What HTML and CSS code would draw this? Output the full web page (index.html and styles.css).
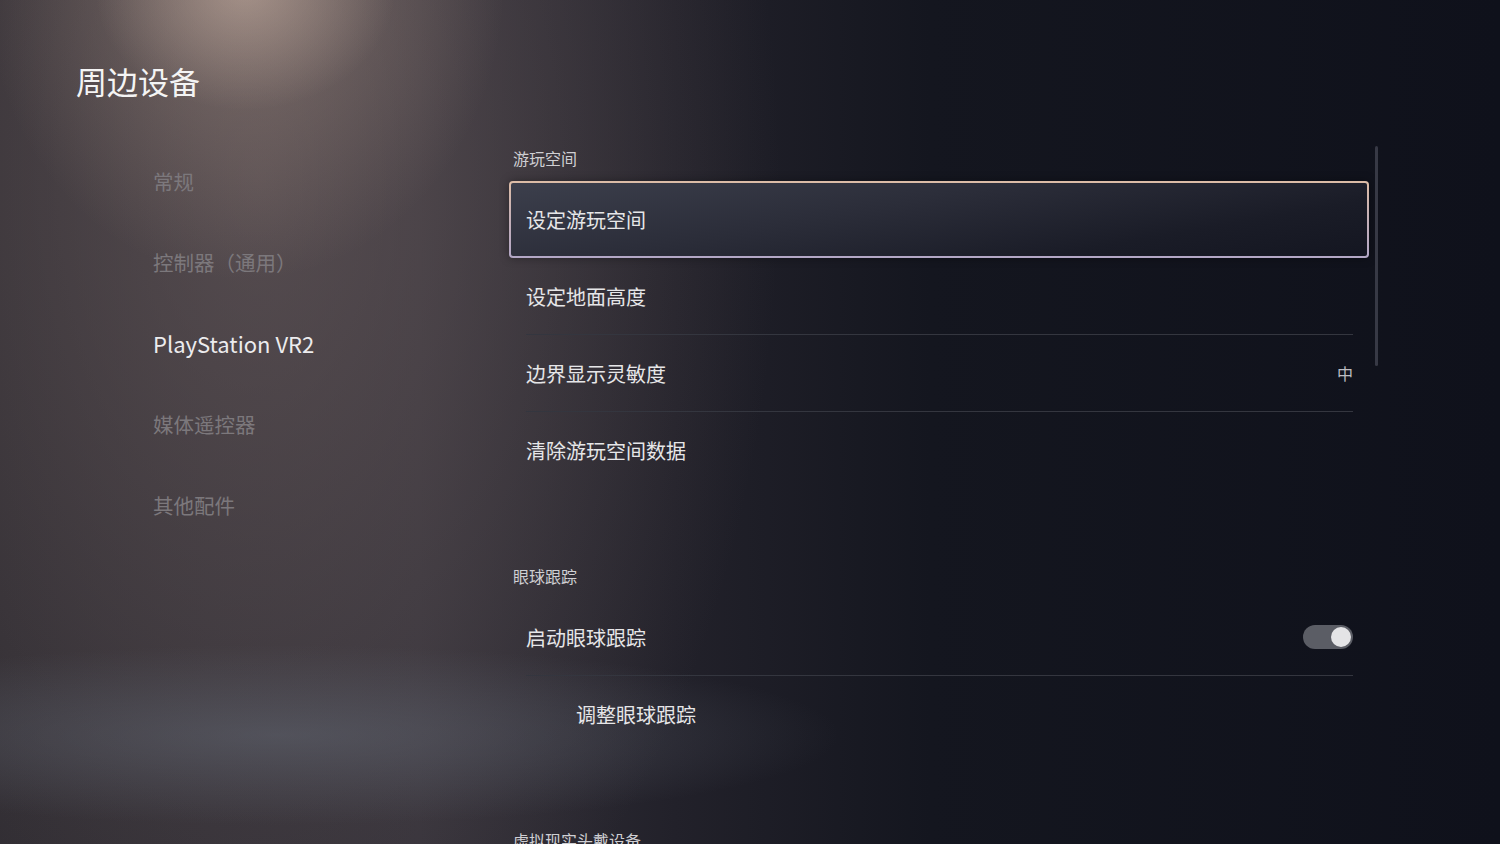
FILE: index.html
```html
<!DOCTYPE html>
<html lang="zh-CN">
<head>
    <meta charset="UTF-8">
    <meta name="viewport" content="width=device-width, initial-scale=1.0">
    <title>周边设备</title>
    <link rel="stylesheet" href="styles.css">
</head>
<body>
    <div class="screen">
        <aside class="side">
            <h1 class="title">周边设备</h1>
            <nav class="nav">
                <div class="nav-item">常规</div>
                <div class="nav-item">控制器（通用）</div>
                <div class="nav-item active">PlayStation VR2</div>
                <div class="nav-item">媒体遥控器</div>
                <div class="nav-item">其他配件</div>
            </nav>
        </aside>

        <main class="content">
            <div class="list">
                <section class="group">
                    <h2 class="group-title">游玩空间</h2>
                    <div class="row selected"><span>设定游玩空间</span></div>
                    <div class="row"><span>设定地面高度</span></div>
                    <div class="divider"></div>
                    <div class="row"><span>边界显示灵敏度</span><span class="value">中</span></div>
                    <div class="divider"></div>
                    <div class="row"><span>清除游玩空间数据</span></div>
                </section>

                <section class="group">
                    <h2 class="group-title">眼球跟踪</h2>
                    <div class="row">
                        <span>启动眼球跟踪</span>
                        <span class="toggle on"><span class="knob"></span></span>
                    </div>
                    <div class="divider"></div>
                    <div class="row sub"><span>调整眼球跟踪</span></div>
                </section>

                <section class="group">
                    <h2 class="group-title">虚拟现实头戴设备</h2>
                </section>
            </div>
            <div class="scrollbar"></div>
        </main>
    </div>
</body>
</html>
```

FILE: styles.css
```css
* {
    margin: 0;
    padding: 0;
    box-sizing: border-box;
}

html, body {
    height: 100%;
    overflow: hidden;
}

body {
    font-family: "Noto Sans CJK SC", "Noto Sans", sans-serif;
    color: #e8e8ea;
    background-color: #10121c;
    background-image:
        radial-gradient(ellipse 150px 120px at 245px -10px, rgba(215, 190, 175, 0.45), rgba(215, 190, 175, 0) 100%),
        radial-gradient(ellipse 260px 300px at 245px -20px, rgba(190, 165, 150, 0.4), rgba(190, 165, 150, 0) 100%),
        radial-gradient(ellipse 560px 90px at 280px 735px, rgba(100, 106, 118, 0.5), rgba(100, 106, 118, 0) 100%),
        radial-gradient(ellipse 520px 900px at 260px 180px, rgba(115, 100, 100, 0.55), rgba(115, 100, 100, 0) 100%),
        linear-gradient(90deg, #2e2b31 0%, #343139 28%, #22212a 45%, #14161f 62%, #0f111b 100%);
}

.screen {
    display: flex;
    height: 100%;
}

/* left column */

.side {
    width: 509px;
    flex-shrink: 0;
    padding: 61px 0 0 76px;
}

.title {
    font-size: 31px;
    font-weight: 400;
    line-height: 40px;
    color: #f4f4f4;
    margin-bottom: 40px;
}

.nav {
    padding-left: 77px;
}

.nav-item {
    font-size: 20.5px;
    line-height: 81px;
    height: 81px;
    color: #7c787c;
}

.nav-item.active {
    color: #ececee;
    font-size: 22px;
}

/* right column */

.content {
    display: flex;
    gap: 6px;
    padding-top: 146px;
}

.list {
    width: 860px;
}

.group + .group {
    margin-top: 76px;
}

.group-title {
    font-size: 16px;
    font-weight: 400;
    line-height: 24px;
    color: #cfcfd3;
    padding-left: 4px;
    margin-bottom: 11px;
}

.row {
    display: flex;
    align-items: center;
    justify-content: space-between;
    height: 76px;
    padding: 0 16px 0 17px;
    font-size: 20px;
    color: #e6e6e8;
}

.row.sub {
    padding-left: 67px;
}

.row.selected {
    border: 2px solid transparent;
    border-radius: 4px;
    padding-left: 15px;
    height: 77px;
    background:
        linear-gradient(170deg, #3c3f4c 0%, #2b2d39 40%, #1a1c27 75%, #141621 100%) padding-box,
        linear-gradient(180deg, #dcbca6 0%, #c4b0b8 50%, #b3a7c6 100%) border-box;
    box-shadow: 0 0 10px rgba(0, 0, 0, 0.35);
}

.divider {
    height: 1px;
    margin: 0 16px 0 17px;
    background-color: #34363f;
}

.value {
    font-size: 16px;
    color: #bdbdc2;
}

.toggle {
    display: flex;
    align-items: center;
    width: 50px;
    height: 24px;
    border-radius: 12px;
    background-color: #5b5d65;
    padding: 2px;
}

.toggle.on {
    justify-content: flex-end;
}

.knob {
    width: 20px;
    height: 20px;
    border-radius: 50%;
    background-color: #e4e4e6;
}

.scrollbar {
    width: 3px;
    height: 220px;
    border-radius: 2px;
    background-color: #373945;
}
```
